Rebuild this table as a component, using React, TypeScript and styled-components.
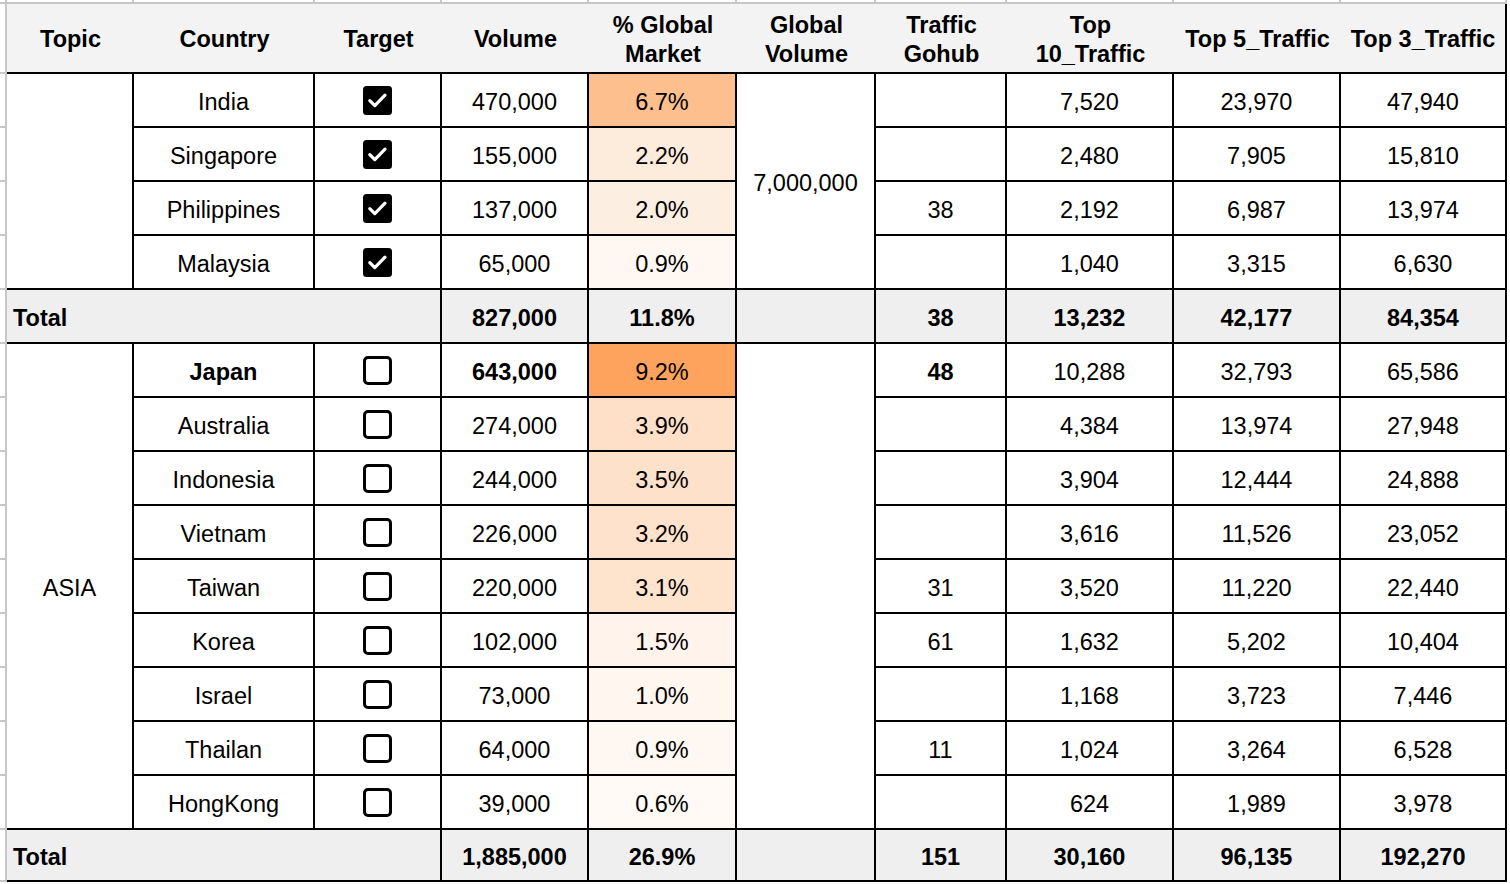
import React from "react";
import styled, { createGlobalStyle } from "styled-components";

const GlobalStyle = createGlobalStyle`
  html, body { margin: 0; padding: 0; background: #ffffff; }
  body { font-family: "Liberation Sans", Arial, sans-serif; color: #000000; }
`;

const GRID = "#c7c7c7";
const INK = "#000000";

const Sheet = styled.div`
  display: grid;
  grid-template-columns: 7px 127px 181px 127px 147px 148px 139px 131px 167px 167px 166px;
  grid-template-rows: 4px 70px repeat(14, 54px) 52px;
  font-family: "Liberation Sans", Arial, sans-serif;
  font-size: 23.5px;
  color: ${INK};
`;

const GridGap = styled.div`
  box-sizing: border-box;
  border-right: 2px solid ${GRID};
  border-bottom: 2px solid ${GRID};
`;

const Gutter = styled(GridGap)`
  grid-column: 1;
`;

const HeadCell = styled.div<{ $edge?: boolean }>`
  box-sizing: border-box;
  display: flex;
  align-items: center;
  justify-content: center;
  padding-top: 3px;
  text-align: center;
  white-space: pre-line;
  background: #f3f3f3;
  border-bottom: 2px solid ${INK};
  border-right: ${(p) => (p.$edge ? `2px solid ${INK}` : "none")};
  font-weight: 700;
  line-height: 29px;
`;

const Cell = styled.div<{ $bg?: string; $bold?: boolean; $rows?: number; $cols?: number }>`
  box-sizing: border-box;
  display: flex;
  align-items: center;
  justify-content: center;
  padding-top: 4px;
  white-space: nowrap;
  line-height: 27px;
  border-right: 2px solid ${INK};
  border-bottom: 2px solid ${INK};
  background: ${(p) => p.$bg ?? "#ffffff"};
  font-weight: ${(p) => (p.$bold ? 700 : 400)};
  grid-row: span ${(p) => p.$rows ?? 1};
  grid-column: span ${(p) => p.$cols ?? 1};
`;

const LabelCell = styled(Cell)`
  justify-content: flex-start;
  padding-left: 6px;
`;

const BoxCell = styled(Cell)`
  padding-top: 0;
`;

const Checkbox = ({ checked }: { checked: boolean }) =>
  checked ? (
    <svg width="29" height="29" viewBox="0 0 29 29" aria-hidden="true">
      <rect x="0" y="0" width="29" height="29" rx="3.5" fill="#000" />
      <path
        d="M6.8 14.6 L11.8 19.6 L22 9.2"
        stroke="#fff"
        strokeWidth="3.2"
        fill="none"
        strokeLinecap="round"
        strokeLinejoin="round"
      />
    </svg>
  ) : (
    <svg width="29" height="29" viewBox="0 0 29 29" aria-hidden="true">
      <rect x="1.5" y="1.5" width="26" height="26" rx="3.5" fill="none" stroke="#000" strokeWidth="3" />
    </svg>
  );

type Row = {
  country: string;
  checked: boolean;
  vol: string;
  pct: string;
  bg: string;
  traffic: string;
  t10: string;
  t5: string;
  t3: string;
  bold?: boolean;
};

const headers = [
  "Topic",
  "Country",
  "Target",
  "Volume",
  "% Global\nMarket",
  "Global\nVolume",
  "Traffic\nGohub",
  "Top\n10_Traffic",
  "Top 5_Traffic",
  "Top 3_Traffic",
];

const group1: Row[] = [
  { country: "India", checked: true, vol: "470,000", pct: "6.7%", bg: "#fdbf8d", traffic: "", t10: "7,520", t5: "23,970", t3: "47,940" },
  { country: "Singapore", checked: true, vol: "155,000", pct: "2.2%", bg: "#fdebdc", traffic: "", t10: "2,480", t5: "7,905", t3: "15,810" },
  { country: "Philippines", checked: true, vol: "137,000", pct: "2.0%", bg: "#fdeee2", traffic: "38", t10: "2,192", t5: "6,987", t3: "13,974" },
  { country: "Malaysia", checked: true, vol: "65,000", pct: "0.9%", bg: "#fff8f2", traffic: "", t10: "1,040", t5: "3,315", t3: "6,630" },
];

const group2: Row[] = [
  { country: "Japan", checked: false, vol: "643,000", pct: "9.2%", bg: "#fea35d", traffic: "48", t10: "10,288", t5: "32,793", t3: "65,586", bold: true },
  { country: "Australia", checked: false, vol: "274,000", pct: "3.9%", bg: "#fedfc7", traffic: "", t10: "4,384", t5: "13,974", t3: "27,948" },
  { country: "Indonesia", checked: false, vol: "244,000", pct: "3.5%", bg: "#fee1ca", traffic: "", t10: "3,904", t5: "12,444", t3: "24,888" },
  { country: "Vietnam", checked: false, vol: "226,000", pct: "3.2%", bg: "#fee2cc", traffic: "", t10: "3,616", t5: "11,526", t3: "23,052" },
  { country: "Taiwan", checked: false, vol: "220,000", pct: "3.1%", bg: "#fee3cd", traffic: "31", t10: "3,520", t5: "11,220", t3: "22,440" },
  { country: "Korea", checked: false, vol: "102,000", pct: "1.5%", bg: "#fff3eb", traffic: "61", t10: "1,632", t5: "5,202", t3: "10,404" },
  { country: "Israel", checked: false, vol: "73,000", pct: "1.0%", bg: "#fff6f0", traffic: "", t10: "1,168", t5: "3,723", t3: "7,446" },
  { country: "Thailan", checked: false, vol: "64,000", pct: "0.9%", bg: "#fff8f2", traffic: "11", t10: "1,024", t5: "3,264", t3: "6,528" },
  { country: "HongKong", checked: false, vol: "39,000", pct: "0.6%", bg: "#fffaf6", traffic: "", t10: "624", t5: "1,989", t3: "3,978" },
];

type Total = { vol: string; pct: string; traffic: string; t10: string; t5: string; t3: string };

const TOTAL_BG = "#efefef";

function Group({ topic, globalVolume, rows, total }: { topic: string; globalVolume: string; rows: Row[]; total: Total }) {
  return (
    <>
      {rows.map((r, i) => (
        <React.Fragment key={r.country}>
          <Gutter />
          {i === 0 && <Cell $rows={rows.length}>{topic}</Cell>}
          <Cell $bold={r.bold}>{r.country}</Cell>
          <BoxCell>
            <Checkbox checked={r.checked} />
          </BoxCell>
          <Cell $bold={r.bold}>{r.vol}</Cell>
          <Cell $bg={r.bg}>{r.pct}</Cell>
          {i === 0 && <Cell $rows={rows.length}>{globalVolume}</Cell>}
          <Cell $bold={r.bold}>{r.traffic}</Cell>
          <Cell>{r.t10}</Cell>
          <Cell>{r.t5}</Cell>
          <Cell>{r.t3}</Cell>
        </React.Fragment>
      ))}
      <Gutter />
      <LabelCell $cols={3} $bg={TOTAL_BG} $bold>
        Total
      </LabelCell>
      <Cell $bg={TOTAL_BG} $bold>{total.vol}</Cell>
      <Cell $bg={TOTAL_BG} $bold>{total.pct}</Cell>
      <Cell $bg={TOTAL_BG} />
      <Cell $bg={TOTAL_BG} $bold>{total.traffic}</Cell>
      <Cell $bg={TOTAL_BG} $bold>{total.t10}</Cell>
      <Cell $bg={TOTAL_BG} $bold>{total.t5}</Cell>
      <Cell $bg={TOTAL_BG} $bold>{total.t3}</Cell>
    </>
  );
}

export default function App() {
  return (
    <>
      <GlobalStyle />
      <Sheet>
        {Array.from({ length: 11 }).map((_, i) => (
          <GridGap key={`top-${i}`} />
        ))}
        <Gutter />
        {headers.map((h, i) => (
          <HeadCell key={h} $edge={i === headers.length - 1}>
            {h}
          </HeadCell>
        ))}
        <Group
          topic=""
          globalVolume="7,000,000"
          rows={group1}
          total={{ vol: "827,000", pct: "11.8%", traffic: "38", t10: "13,232", t5: "42,177", t3: "84,354" }}
        />
        <Group
          topic="ASIA"
          globalVolume=""
          rows={group2}
          total={{ vol: "1,885,000", pct: "26.9%", traffic: "151", t10: "30,160", t5: "96,135", t3: "192,270" }}
        />
      </Sheet>
    </>
  );
}
